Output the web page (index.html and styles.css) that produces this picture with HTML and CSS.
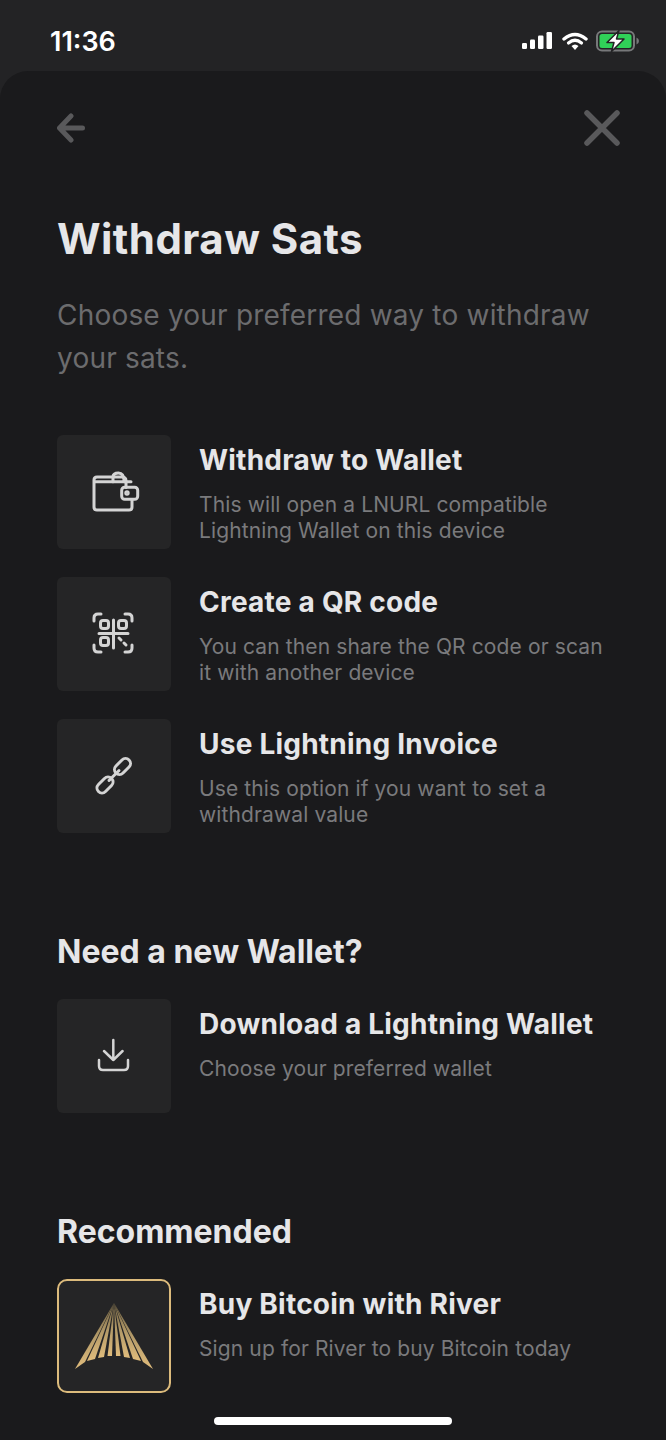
FILE: index.html
```html
<!DOCTYPE html>
<html lang="en">
<head>
	<meta charset="utf-8">
	<title>Withdraw Sats</title>
	<link rel="stylesheet" href="styles.css">
</head>
<body>

<div class="statusbar">
	<span class="clock">11:36</span>
	<div class="status-icons">
		<svg class="signal" width="30" height="18" viewBox="0 0 30 18">
			<rect x="0" y="11" width="5" height="6" rx="1.2"/>
			<rect x="8" y="7.5" width="5" height="9.5" rx="1.2"/>
			<rect x="16" y="3.5" width="5.5" height="13.5" rx="1.2"/>
			<rect x="24.5" y="0" width="5.5" height="17" rx="1.2"/>
		</svg>
		<svg class="wifi" width="26" height="19" viewBox="0 0 26 19">
			<path d="M2 7 Q13 -2 24 7" fill="none" stroke="#fff" stroke-width="3.4" stroke-linecap="round"/>
			<path d="M6.5 11 Q13 5.5 19.5 11" fill="none" stroke="#fff" stroke-width="3.2" stroke-linecap="round"/>
			<path d="M9.5 14 Q13 11 16.500 14 L13 18 Z" fill="#fff"/>
		</svg>
		<svg class="battery" width="44" height="22" viewBox="0 0 44 22">
			<rect x="1" y="1.5" width="37" height="19" rx="5" fill="none" stroke="#77787a" stroke-width="2"/>
			<rect x="3.500" y="4" width="32" height="14" rx="2.500" fill="#30d158"/>
			<path d="M40.500 7.500 Q43 8.500 43 11 Q43 13.500 40.500 14.500 Z" fill="#77787a"/>
			<path d="M23 0.500 L11 12.500 H18 L15.500 21.500 L28 9 H20.500 Z" fill="#fff" stroke="#232325" stroke-width="1.500" stroke-linejoin="round"/>
		</svg>
	</div>
</div>

<div class="sheet">
	<div class="topnav">
		<svg width="30" height="30" viewBox="0 0 30 30" class="nav-icon">
			<path d="M14 3 L2.500 15 L14 27 M3 15 H25.500"/>
		</svg>
		<svg width="36" height="36" viewBox="0 0 36 36" class="nav-icon close">
			<path d="M3 3 L33 33 M33 3 L3 33"/>
		</svg>
	</div>

	<h1>Withdraw Sats</h1>
	<p class="lead">Choose your preferred way to withdraw your sats.</p>

	<div class="list">
		<div class="row">
			<div class="tile">
				<svg viewBox="0 0 114 114" class="glyph">
					<path d="M69 52.500 V46 Q69 42 65 42 H40 Q37 42 37 45 V72 Q37 75 40 75 H72 Q75 75 75 72 V65"/>
					<path d="M37.500 46.700 H56 M67.500 46.700 H74"/>
					<path d="M56 42 Q56 38 61.500 38 Q67 38 67 46.700 H56 Z"/>
					<rect x="64.700" y="52.300" width="16" height="12" rx="3"/>
					<circle cx="70" cy="58" r="1.200"/>
				</svg>
			</div>
			<div class="info">
				<h3>Withdraw to Wallet</h3>
				<p>This will open a LNURL compatible<br>Lightning Wallet on this device</p>
			</div>
		</div>
		<div class="row">
			<div class="tile">
				<svg viewBox="0 0 114 114" class="glyph">
					<path d="M37 44 V41 Q37 37 41 37 H44 M68 37 H71 Q75 37 75 41 V44 M75 68 V71 Q75 75 71 75 H68 M44 75 H41 Q37 75 37 71 V68"/>
					<rect x="43.500" y="43.500" width="8" height="8" rx="2.500"/>
					<rect x="61.500" y="43.500" width="8" height="8" rx="2.500"/>
					<rect x="43.500" y="60.500" width="8" height="8" rx="2.500"/>
					<path d="M42 56.500 H71 M56.500 43 V71"/>
					<path d="M62 61 L64 63 M67 66 L69 68"/>
				</svg>
			</div>
			<div class="info">
				<h3>Create a QR code</h3>
				<p>You can then share the QR code or scan<br>it with another device</p>
			</div>
		</div>
		<div class="row">
			<div class="tile">
				<svg viewBox="0 0 114 114" class="glyph">
					<rect x="56.250" y="42.500" width="18.500" height="10" rx="5" transform="rotate(-45 65.500 47.500)"/>
					<rect x="38.750" y="61" width="18.500" height="10" rx="5" transform="rotate(-45 48 66)"/>
					<path d="M52 61.500 L62 51.500"/>
				</svg>
			</div>
			<div class="info">
				<h3>Use Lightning Invoice</h3>
				<p>Use this option if you want to set a<br>withdrawal value</p>
			</div>
		</div>
	</div>

	<h2 class="section-one">Need a new Wallet?</h2>
	<div class="row">
		<div class="tile">
			<svg viewBox="0 0 114 114" class="glyph thin">
				<path d="M56.300 41 V61 M47 52 L56.300 61 L65.600 52"/>
				<path d="M42 61 V67 Q42 71 46 71 H67 Q71 71 71 67 V61"/>
			</svg>
		</div>
		<div class="info">
			<h3>Download a Lightning Wallet</h3>
			<p>Choose your preferred wallet</p>
		</div>
	</div>

	<h2 class="section-two">Recommended</h2>
	<div class="row">
		<div class="tile gold">
			<svg viewBox="0 0 110 110" class="river">
				<defs>
					<linearGradient id="ray" x1="0" y1="0" x2="0" y2="1">
						<stop offset="0" stop-color="#6f6143"/>
						<stop offset="0.5" stop-color="#b39a68"/>
						<stop offset="1" stop-color="#e0bc7c"/>
					</linearGradient>
				</defs>
				<g fill="url(#ray)">
					<path d="M55 22 L16 88 L26 81 Z"/>
					<path d="M55 22 L28 80 L36 78 Z"/>
					<path d="M55 22 L39 77 L45 76 Z"/>
					<path d="M55 22 L48.500 75 L53 75 Z"/>
					<path d="M55 22 L57 75 L61.500 75 Z"/>
					<path d="M55 22 L65 76 L71 77 Z"/>
					<path d="M55 22 L74 78 L82 80 Z"/>
					<path d="M55 22 L84 81 L94 88 Z"/>
				</g>
			</svg>
		</div>
		<div class="info">
			<h3>Buy Bitcoin with River</h3>
			<p>Sign up for River to buy Bitcoin today</p>
		</div>
	</div>
</div>

<div class="home-bar"></div>

</body>
</html>
```

FILE: styles.css
```css
html, body {
	margin: 0;
	padding: 0;
}
body {
	position: relative;
	height: 1440px;
	overflow: hidden;
	background: #232325;
	font-family: Inter, "Liberation Sans", sans-serif;
	color: #e6e6e8;
}

.statusbar {
	height: 71px;
	display: flex;
	justify-content: space-between;
	align-items: center;
	padding: 11px 26px 0 50px;
	box-sizing: border-box;
}
.clock {
	color: #fff;
	font-size: 27px;
	font-weight: 600;
}
.status-icons {
	display: flex;
	align-items: center;
	gap: 8px;
}
.signal {
	fill: #fff;
	margin-right: 2px;
}

.sheet {
	height: 1369px;
	box-sizing: border-box;
	padding: 0 46px 0 57px;
	background: #1a1a1c;
	border-radius: 28px 28px 0 0;
}

.topnav {
	display: flex;
	justify-content: space-between;
	align-items: center;
	height: 114px;
}
.nav-icon path {
	fill: none;
	stroke: #59595b;
	stroke-width: 5;
	stroke-linecap: round;
	stroke-linejoin: round;
}
.close path {
	stroke-width: 5.500;
}

h1 {
	margin: 29px 0 0;
	font-size: 42px;
	line-height: 50px;
	font-weight: 700;
	letter-spacing: 0.45px;
}
.lead {
	margin: 30px 0 0;
	font-size: 28px;
	line-height: 43px;
	font-weight: 400;
	letter-spacing: 0.2px;
	color: #6c6c6e;
}

.list {
	margin-top: 55px;
	display: flex;
	flex-direction: column;
	gap: 28px;
}
.row {
	display: flex;
	gap: 28px;
}
.tile {
	flex: none;
	width: 114px;
	height: 114px;
	box-sizing: border-box;
	background: #252526;
	border-radius: 6px;
}
.tile.gold {
	border: 2px solid #dcbb7c;
	border-radius: 10px;
}
.tile svg {
	display: block;
	width: 100%;
	height: 100%;
}
.glyph * {
	fill: none;
	stroke: #d4d4d4;
	stroke-width: 3;
	stroke-linecap: round;
	stroke-linejoin: round;
}
.thin * {
	stroke-width: 2.500;
}

.info h3 {
	margin: 7px 0 0;
	font-size: 28px;
	line-height: 36px;
	font-weight: 700;
	letter-spacing: 0.23px;
}
.info p {
	margin: 14px 0 0;
	font-size: 21px;
	line-height: 26px;
	letter-spacing: 0.12px;
	color: #7a7a7d;
}

h2 {
	margin: 0;
	font-size: 32px;
	line-height: 40px;
	font-weight: 700;
}
.section-one {
	margin-top: 99px;
	margin-bottom: 27px;
}
.section-two {
	margin-top: 99px;
	margin-bottom: 27px;
}

.home-bar {
	position: absolute;
	left: 214px;
	top: 1417px;
	width: 238px;
	height: 8px;
	border-radius: 4px;
	background: #fff;
}
```
